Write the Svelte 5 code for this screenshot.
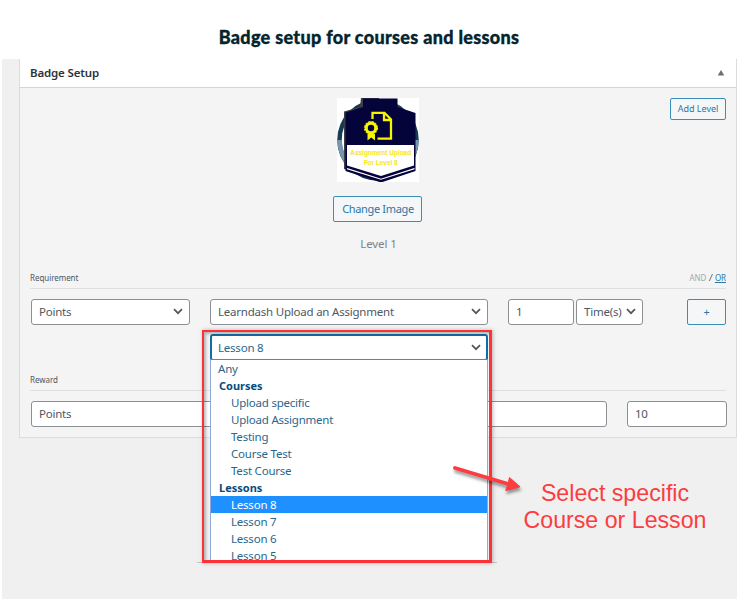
<script>
  const options = [
    { label: 'Any', kind: 'root' },
    { label: 'Courses', kind: 'group' },
    { label: 'Upload specific', kind: 'item' },
    { label: 'Upload Assignment', kind: 'item' },
    { label: 'Testing', kind: 'item' },
    { label: 'Course Test', kind: 'item' },
    { label: 'Test Course', kind: 'item' },
    { label: 'Lessons', kind: 'group' },
    { label: 'Lesson 8', kind: 'item', selected: true },
    { label: 'Lesson 7', kind: 'item' },
    { label: 'Lesson 6', kind: 'item' },
    { label: 'Lesson 5', kind: 'item' }
  ];
</script>

{#snippet chevron()}
  <svg class="chevron" width="10" height="7" viewBox="0 0 10 7"><path d="M1 1.2 5 5.2 9 1.2" fill="none" stroke="#50575e" stroke-width="1.7" /></svg>
{/snippet}

<main>
  <h1>Badge setup for courses and lessons</h1>
  <div class="screen">
    <section class="panel">
      <header>
        <h2>Badge Setup</h2>
        <svg width="8" height="6" viewBox="0 0 8 6"><path d="M4 0 7.3 5.6H.7Z" fill="#6c7075" /></svg>
      </header>

      <div class="level">
        <button class="add">Add Level</button>
        <svg class="badge" width="82" height="84" viewBox="0 0 82 84">
          <rect width="82" height="84" fill="#fff" />
          <circle cx="41" cy="42" r="38.500" fill="none" stroke="#173b54" stroke-width="4.500" />
          <path d="M2.500 42a38.500 38.500 0 0 0 7 22M79.500 42a38.500 38.500 0 0 1-7 22" fill="none" stroke="#7896ab" stroke-width="4.500" />
          <path d="M24 0 23 9 7 13.500V71L42 82V0Z" fill="#3c3e48" />
          <path d="M26 .5H60.500V9L78.500 15V73L44 84.500 8.500 73V14.500L26 9Z" fill="#04033a" />
          <path d="M10 47H77V67.500L44 78 10 67.500Z" fill="#fff" />
          <path d="M10 70.600 44 81.200 77.500 70.600" fill="none" stroke="#fff" stroke-width="1.200" />
          <g fill="none" stroke="#f6f600">
            <path d="M35.500 21V14.800H47.500L54 21.500V40.700H40.500M47 15V22H54" stroke-width="2.300" />
            <circle cx="34" cy="30" r="4.800" stroke-width="3.200" />
            <circle cx="34" cy="30" r="6.600" stroke-width="1" stroke-dasharray="2.300 1.200" />
          </g>
          <path d="M30.500 36H38V42.500L34.200 39.600 30.500 42.500Z" fill="#f6f600" />
          <text x="43.700" y="57" textLength="61" lengthAdjust="spacingAndGlyphs">Assignment Upload</text>
          <text x="43.700" y="66.800" textLength="34" lengthAdjust="spacingAndGlyphs">For Level 8</text>
        </svg>
        <button class="change">Change Image</button>
        <p>Level 1</p>
      </div>

      <div class="caption">
        <span>Requirement</span>
        <span class="logic">AND <i>/</i> <a href="#or">OR</a></span>
      </div>
      <div class="row requirement">
        <div class="field points"><span>Points</span>{@render chevron()}</div>
        <div class="trigger">
          <div class="field"><span>Learndash Upload an Assignment</span>{@render chevron()}</div>
          <div class="field lesson">
            <span>Lesson 8</span>{@render chevron()}
            <div class="edge"></div>
            <ul>
              {#each options as option}
                <li class={option.kind} class:selected={option.selected}>{option.label}</li>
              {/each}
            </ul>
            <div class="outline"></div>
          </div>
        </div>
        <div class="field count"><span>1</span></div>
        <div class="field times"><span>Time(s)</span>{@render chevron()}</div>
        <button class="plus">+</button>
      </div>

      <div class="caption reward"><span>Reward</span></div>
      <div class="row">
        <div class="field type"><span>Points</span></div>
        <div class="field amount"><span>10</span></div>
      </div>
    </section>

    <div class="note">Select specific<br />Course or Lesson</div>
    <svg class="arrow" width="80" height="40" viewBox="0 0 80 40">
      <path d="M7 8 62 24.500" stroke="#fb3d40" stroke-width="3.800" stroke-linecap="round" />
      <path d="M61.500 17.500 72 26.800 57.700 30.500 60 24Z" fill="#fb3d40" stroke="#fb3d40" />
    </svg>
  </div>
</main>

<style>
  :global(body) { background: #fff; }
  main {
    width: 740px;
    height: 601px;
    overflow: hidden;
    box-sizing: border-box;
    font-family: "Noto Sans", "Open Sans", sans-serif;
    font-size: 11.5px;
    letter-spacing: -0.22px;
    color: #50575e;
  }
  main * { box-sizing: border-box; }
  h1, h2, p, ul { margin: 0; padding: 0; }
  h1 {
    height: 59px;
    padding: 26px 2px 0 0;
    text-align: center;
    font: 900 18px/22px Lato, sans-serif;
    letter-spacing: 0.32px;
    color: #04242e;
    -webkit-text-stroke: 0.35px #04242e;
    white-space: nowrap;
  }
  .screen {
    position: relative;
    width: 735px;
    height: 540px;
    margin-left: 2px;
    padding-left: 17px;
    background: #f0f0f0;
  }
  .panel {
    width: 718px;
    height: 379px;
    border: 1px solid #dcdcde;
    border-top: 0;
    background: #f4f4f4;
  }
  header {
    display: flex;
    justify-content: space-between;
    align-items: center;
    height: 29px;
    padding: 0 11px 1px 10px;
    border-bottom: 1px solid #d3d4d6;
    background: #fff;
  }
  h2 { font-size: 11.5px; font-weight: 600; letter-spacing: -0.15px; color: #2c3338; }
  .level {
    position: relative;
    display: flex;
    flex-direction: column;
    align-items: center;
    height: 181px;
    padding: 10px 1px 0 0;
  }
  .badge { display: block; }
  .badge text {
    font: 700 6.5px "Liberation Sans", sans-serif;
    letter-spacing: 0;
    fill: #f8e516;
    text-anchor: middle;
  }
  button {
    padding: 0;
    border: 1px solid #3a8fb8;
    border-radius: 2px;
    background: #f4f6f7;
    color: #2a78a5;
    font: inherit;
    letter-spacing: inherit;
    white-space: nowrap;
  }
  .add { position: absolute; top: 10px; right: 10px; width: 56px; height: 22px; padding-bottom: 1px; font-size: 9px; letter-spacing: 0; }
  .change { width: 89px; height: 26px; margin-top: 14px; padding: 0 0 1px 1px; font-size: 11px; letter-spacing: -0.35px; }
  .level p { margin: 14px 0 0 2px; line-height: 16px; letter-spacing: -0.1px; color: #7d8186; }
  .caption {
    display: flex;
    justify-content: space-between;
    align-items: flex-start;
    height: 20px;
    margin: 0 10px;
    padding-top: 3px;
    border-bottom: 1px solid #dedfe0;
    font-size: 8px;
    line-height: 12px;
    letter-spacing: -0.05px;
  }
  .logic { color: #a5a8ab; font-size: 8px; word-spacing: 0.8px; }
  .logic i { color: #444; }
  .logic a { color: #2a78a5; }
  .row { display: flex; align-items: flex-start; padding: 10px 9px 0 11px; }
  .field {
    position: relative;
    display: flex;
    align-items: center;
    justify-content: space-between;
    height: 26px;
    padding: 0 6px 1px 7px;
    border: 1px solid #8c8f94;
    border-radius: 3px;
    background: #fff;
    white-space: nowrap;
  }
  .points { width: 159px; }
  .trigger { display: flex; flex-direction: column; gap: 9px; width: 278px; margin: 0 20px; }
  .lesson { height: 27px; border: 2px solid #146ca5; color: #2a668c; padding: 0 5px 0 6px; }
  ul {
    position: absolute;
    z-index: 1;
    top: 23px;
    left: -2px;
    width: 278px;
    height: 203px;
    overflow: hidden;
    border: 1px solid #8fa9d8;
    border-top-color: #4f86bd;
    list-style: none;
    background: #fff;
    line-height: 17px;
    color: #2a668c;
  }
  li { height: 17px; }
  .root { padding-left: 7px; }
  .group { padding-left: 8px; font-weight: 700; font-size: 11px; letter-spacing: 0; color: #064b7c; }
  .item { padding-left: 20px; }
  .selected { background: #1e90ff; color: #fff; }
  .edge {
    position: absolute;
    top: 226px;
    left: -15px;
    width: 300px;
    height: 1px;
    background: #c4c4c4;
  }
  .outline {
    position: absolute;
    z-index: 2;
    top: -6px;
    left: -10px;
    width: 290px;
    height: 233px;
    border: 3px solid #fb3237;
    border-width: 2px 3px 3px 2px;
    box-shadow: 1px 0 4px #0004, inset 2px 2px 3px #0004;
  }
  .count { width: 66px; margin-right: 2px; }
  .times { width: 67px; }
  .plus { width: 39px; height: 26px; margin-left: 44px; padding-bottom: 2px; font-size: 11px; }
  .reward { margin-top: 10px; }
  .type { width: 576px; margin-right: 20px; }
  .amount { width: 100px; }
  .requirement { height: 72px; }
  .note {
    position: absolute;
    left: 513px;
    top: 421px;
    width: 200px;
    text-align: center;
    font: 23.200px/27px "Liberation Sans", Arial, sans-serif;
    letter-spacing: 0;
    color: #fb3d40;
    white-space: nowrap;
  }
  .arrow { position: absolute; z-index: 3; left: 446px; top: 401px; filter: drop-shadow(1px 3px 1.500px #0006); }
</style>
